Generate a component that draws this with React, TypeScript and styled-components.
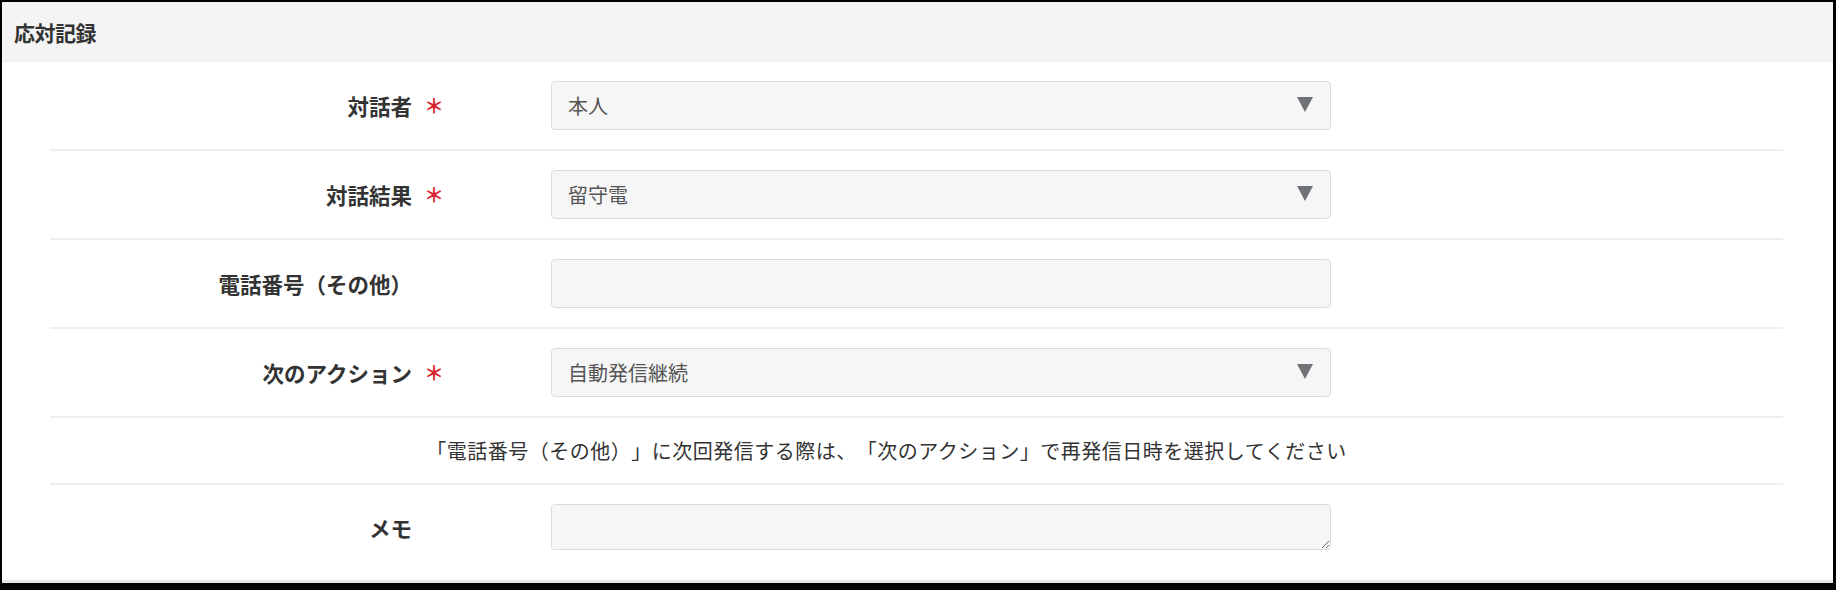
import styled, { createGlobalStyle } from 'styled-components'

const GlobalStyle = createGlobalStyle`
    html, body {
        margin: 0;
        padding: 0;
        background: #000;
    }

    body {
        font-family: 'Noto Sans CJK JP', 'Noto Sans', sans-serif;
        color: #333;
        text-spacing-trim: space-all;
    }
`

const Panel = styled.section`
    box-sizing: border-box;
    width: 1836px;
    height: 590px;
    border-style: solid;
    border-color: #000;
    border-width: 2px 3px 7px 2px;
    background-color: #fff;
    display: flex;
    flex-direction: column;
`

const PanelHeader = styled.header`
    box-sizing: border-box;
    height: 60px;
    padding-left: 12px;
    display: flex;
    align-items: center;
    background-color: #f4f4f4;
    border-bottom: 1px solid #ebebeb;

    h1 {
        margin: 0;
        font-size: 21px;
        font-weight: 700;
        color: #333;
        letter-spacing: -0.5px;
    }
`

const PanelBody = styled.div`
    flex: 1;
    display: flex;
    flex-direction: column;
    border-bottom: 3px solid #e6e6e6;
`

const FormRow = styled.div<{ $height: number }>`
    box-sizing: border-box;
    height: ${(p) => p.$height}px;
    margin: 0 50px 0 48px;
    display: grid;
    grid-template-columns: 362px 139px 780px;
    align-items: center;
    border-bottom: 2px solid #efefef;
`

const Label = styled.label`
    text-align: right;
    font-size: 21.5px;
    font-weight: 700;
    color: #333;
`

const Required = styled.span`
    padding-left: 12px;
    font-size: 20px;
    color: #d9232e;
    font-weight: 700;
`

const SelectWrap = styled.div`
    position: relative;
    width: 780px;
`

const Select = styled.select`
    box-sizing: border-box;
    appearance: none;
    width: 100%;
    height: 49px;
    padding: 0 16px;
    font-family: inherit;
    font-size: 20px;
    color: #555;
    background-color: #f6f6f6;
    border: 1px solid #dcdcdc;
    border-radius: 4px;
    outline: none;
`

const Arrow = styled.svg`
    position: absolute;
    right: 18px;
    top: 16px;
    pointer-events: none;
`

const TextInput = styled.input`
    box-sizing: border-box;
    width: 780px;
    height: 49px;
    padding: 0 16px;
    font-family: inherit;
    font-size: 20px;
    color: #555;
    background-color: #f6f6f6;
    border: 1px solid #dcdcdc;
    border-radius: 4px;
    outline: none;
`

const TextArea = styled.textarea`
    box-sizing: border-box;
    display: block;
    width: 780px;
    height: 46px;
    padding: 8px 16px;
    font-family: inherit;
    font-size: 20px;
    color: #555;
    background-color: #f6f6f6;
    border: 1px solid #dcdcdc;
    border-radius: 4px;
    outline: none;
    resize: vertical;
`

const NoteRow = styled.div`
    box-sizing: border-box;
    height: 67px;
    margin: 0 50px 0 48px;
    padding-right: 60px;
    display: flex;
    align-items: center;
    justify-content: center;
    border-bottom: 2px solid #efefef;
    font-size: 20px;
    letter-spacing: 0.5px;
    color: #333;
`

const MemoRow = styled.div`
    box-sizing: border-box;
    height: 92px;
    margin: 0 50px 0 48px;
    padding-top: 19px;
    display: grid;
    grid-template-columns: 362px 139px 780px;
    align-items: start;

    label {
        padding-top: 8px;
    }
`

const selects = [
    { label: '対話者', value: '本人', options: ['本人', '家族', 'その他'] },
    { label: '対話結果', value: '留守電', options: ['留守電', '通話', '不在'] },
]

const DropArrow = () => (
    <Arrow width="16" height="15" viewBox="0 0 16 15">
        <path d="M0 0 H16 L8 15 Z" fill="#6f7277" />
    </Arrow>
)

const SelectField = ({ value, options }: { value: string; options: string[] }) => (
    <SelectWrap>
        <Select defaultValue={value}>
            {options.map((o) => (
                <option key={o} value={o}>
                    {o}
                </option>
            ))}
        </Select>
        <DropArrow />
    </SelectWrap>
)

export default function App() {
    return (
        <>
            <GlobalStyle />
            <Panel>
                <PanelHeader>
                    <h1>応対記録</h1>
                </PanelHeader>

                <PanelBody>
                    {selects.map((s) => (
                        <FormRow $height={89} key={s.label}>
                            <Label>{s.label}</Label>
                            <Required>＊</Required>
                            <SelectField value={s.value} options={s.options} />
                        </FormRow>
                    ))}

                    <FormRow $height={89}>
                        <Label>電話番号（その他）</Label>
                        <span />
                        <TextInput type="text" />
                    </FormRow>

                    <FormRow $height={89}>
                        <Label>次のアクション</Label>
                        <Required>＊</Required>
                        <SelectField value="自動発信継続" options={['自動発信継続', '再発信日時指定', '終了']} />
                    </FormRow>

                    <NoteRow>
                        「電話番号（その他）」に次回発信する際は、「次のアクション」で再発信日時を選択してください
                    </NoteRow>

                    <MemoRow>
                        <Label>メモ</Label>
                        <span />
                        <TextArea />
                    </MemoRow>
                </PanelBody>
            </Panel>
        </>
    )
}
